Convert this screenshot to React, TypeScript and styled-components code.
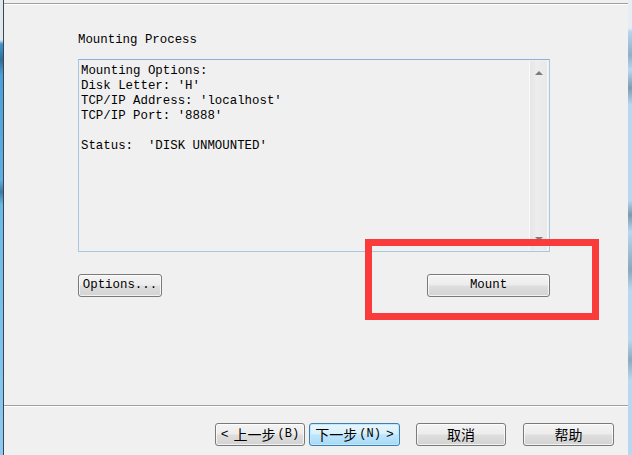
import React from "react";
import styled, { createGlobalStyle, css } from "styled-components";

const GlobalStyle = createGlobalStyle`
  html, body {
    margin: 0;
    padding: 0;
    background: #f0f0f0;
    overflow: hidden;
  }
  #root {
    width: 632px;
    height: 455px;
  }
`;

const MONO = `"Liberation Mono", "DejaVu Sans Mono", monospace`;
const CJK = `"Noto Sans CJK SC", "Noto Sans", sans-serif`;

const Window = styled.div`
  position: relative;
  width: 632px;
  height: 455px;
  display: flex;
  background: #f0f0f0;
  overflow: hidden;
`;

const FrameEdge = styled.div<{ $side: "left" | "right" }>`
  flex: 0 0 ${(p) => (p.$side === "left" ? 3 : 4)}px;
  height: 100%;
  ${(p) =>
    p.$side === "left"
      ? css`
          background: linear-gradient(
            180deg,
            #dfe7ef 0px,
            #dfe7ef 40px,
            #3f95cf 44px,
            #2f6e9c 60px,
            #4aa0d8 75px,
            #5fb0e2 180px,
            #3a7aa6 192px,
            #6ab9e8 205px,
            #8ccaf2 455px
          );
        `
      : css`
          background: linear-gradient(
            180deg,
            #e6edf5 0px,
            #e6edf5 28px,
            #b4d4f0 32px,
            #8fb0cc 55px,
            #b8d7f2 70px,
            #7f9bb6 88px,
            #b8d7f2 105px,
            #b8d7f2 200px,
            #7d98b2 215px,
            #b8d7f2 232px,
            #8aa6c0 270px,
            #b8d7f2 290px,
            #b8d7f2 340px,
            #8ea9c2 360px,
            #b8d7f2 380px,
            #b8d7f2 455px
          );
        `}
`;

const Main = styled.div`
  flex: 1 1 auto;
  display: flex;
  flex-direction: column;
  border-left: 1px solid #3b4550;
  background: #f0f0f0;
`;

const TopRule = styled.div`
  margin-top: 3px;
  height: 0;
  border-top: 1px solid #a0a0a0;
  border-bottom: 1px solid #ffffff;
`;

const Content = styled.div`
  flex: 1 1 auto;
  display: flex;
  flex-direction: column;
  padding-left: 74px;
`;

const GroupLabel = styled.div`
  margin-top: 28px;
  height: 15px;
  line-height: 15px;
  font-family: ${MONO};
  font-size: 12.4px;
  color: #000;
  white-space: pre;
`;

const LogBox = styled.div`
  margin-top: 11px;
  width: 472px;
  height: 193px;
  box-sizing: border-box;
  display: flex;
  border: 1px solid #a9c6e3;
  border-top-color: #8db2d8;
  background: #f0f0f0;
`;

const LogText = styled.pre`
  flex: 1 1 auto;
  margin: 0;
  padding: 4px 0 0 2px;
  font-family: ${MONO};
  font-size: 12.4px;
  line-height: 15px;
  color: #000;
`;

const ScrollBar = styled.div`
  flex: 0 0 19px;
  margin: 1px 1px 1px 0;
  box-sizing: border-box;
  display: flex;
  flex-direction: column;
  justify-content: space-between;
  align-items: center;
  padding: 10px 0 9px;
  border-left: 1px solid #fafafa;
  border-right: 1px solid #f7f7f7;
  background: linear-gradient(90deg, #e6e6e6, #ededed 40%, #e9e9e9);
`;

const Arrow = styled.div<{ $dir: "up" | "down" }>`
  width: 0;
  height: 0;
  border-left: 4px solid transparent;
  border-right: 4px solid transparent;
  ${(p) =>
    p.$dir === "up"
      ? css`
          border-bottom: 4px solid #7d7d7d;
        `
      : css`
          border-top: 4px solid #7d7d7d;
        `}
`;

const ActionRow = styled.div`
  margin-top: 22px;
  width: 472px;
  display: flex;
  justify-content: space-between;
`;

const PushButton = styled.button<{ $w: number; $focused?: boolean; $gap?: number }>`
  width: ${(p) => p.$w}px;
  height: 23px;
  margin: 0 0 0 ${(p) => p.$gap ?? 0}px;
  padding: 0;
  box-sizing: border-box;
  border: 1px solid #7a7a7a;
  border-radius: 3px;
  background: linear-gradient(180deg, #f4f4f4 0%, #ececec 48%, #dedede 52%, #d3d3d3 100%);
  box-shadow: inset 0 0 0 1px rgba(255, 255, 255, 0.7);
  color: #000;
  font-family: ${MONO};
  font-size: 12.4px;
  line-height: 21px;
  white-space: pre;
  display: flex;
  align-items: center;
  justify-content: center;
  ${(p) =>
    p.$focused &&
    css`
      border-color: #3c7fb1;
      background: linear-gradient(180deg, #eaf6fd 0%, #d9f0fc 45%, #bee6fd 52%, #a7d9f5 100%);
      box-shadow: inset 0 0 0 1px #c4e8fb;
    `}
`;

const CjkLabel = styled.span`
  font-family: ${CJK};
  font-size: 14px;
  line-height: 21px;
  color: #000;
  white-space: pre;
  display: inline-flex;
  align-items: center;
`;

const Mnemonic = styled.span`
  font-family: ${MONO};
  font-size: 12px;
  margin-left: 2px;
`;

const Chevron = styled.span<{ $side: "left" | "right" }>`
  font-family: ${MONO};
  font-size: 13px;
  ${(p) => (p.$side === "left" ? "margin-right: 5px;" : "margin-left: 5px;")}
`;

const Separator = styled.div`
  height: 0;
  border-top: 1px solid #a0a0a0;
  border-bottom: 1px solid #ffffff;
`;

const WizardBar = styled.div`
  height: 48px;
  box-sizing: border-box;
  display: flex;
  justify-content: flex-end;
  align-items: flex-start;
  padding: 16px 14px 0 0;
`;

const Highlight = styled.div`
  position: absolute;
  left: 365px;
  top: 239px;
  width: 234px;
  height: 81px;
  box-sizing: border-box;
  border: 7px solid #f93b3b;
  pointer-events: none;
`;

const logLines = `Mounting Options:
Disk Letter: 'H'
TCP/IP Address: 'localhost'
TCP/IP Port: '8888'

Status:  'DISK UNMOUNTED'`;

export default function App() {
  return (
    <>
      <GlobalStyle />
      <Window>
        <FrameEdge $side="left" />
        <Main>
          <TopRule />
          <Content>
            <GroupLabel>Mounting Process</GroupLabel>
            <LogBox>
              <LogText>{logLines}</LogText>
              <ScrollBar>
                <Arrow $dir="up" />
                <Arrow $dir="down" />
              </ScrollBar>
            </LogBox>
            <ActionRow>
              <PushButton $w={84}>Options...</PushButton>
              <PushButton $w={123}>Mount</PushButton>
            </ActionRow>
          </Content>
          <Separator />
          <WizardBar>
            <PushButton $w={90}>
              <CjkLabel>
                <Chevron $side="left">&lt;</Chevron>上一步<Mnemonic>(B)</Mnemonic>
              </CjkLabel>
            </PushButton>
            <PushButton $w={91} $gap={4} $focused>
              <CjkLabel>
                下一步<Mnemonic>(N)</Mnemonic>
                <Chevron $side="right">&gt;</Chevron>
              </CjkLabel>
            </PushButton>
            <PushButton $w={90} $gap={16}>
              <CjkLabel>取消</CjkLabel>
            </PushButton>
            <PushButton $w={91} $gap={17}>
              <CjkLabel>帮助</CjkLabel>
            </PushButton>
          </WizardBar>
        </Main>
        <FrameEdge $side="right" />
        <Highlight />
      </Window>
    </>
  );
}
